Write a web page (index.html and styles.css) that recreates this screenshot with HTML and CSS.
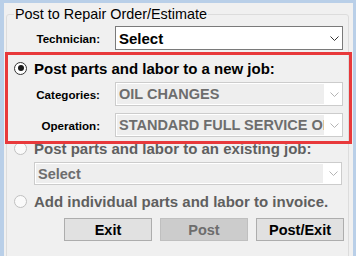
FILE: index.html
```html
<!DOCTYPE html>
<html>
<head>
<meta charset="utf-8">
<link rel="stylesheet" href="styles.css">
</head>
<body>
<div class="window">
  <fieldset class="group">
    <legend class="legend">Post to Repair Order/Estimate</legend>

    <div class="field tech">
      <span class="lbl">Technician:</span>
      <div class="combo">
        <span class="val">Select</span>
        <span class="arrow"><svg class="chev" width="9" height="5" viewBox="0 0 9 5"><polyline points="0.5,0.5 4.5,4.5 8.5,0.5" fill="none" stroke="#333" stroke-width="1"/></svg></span>
      </div>
    </div>

    <div class="radio-row r1">
      <span class="radio checked"></span>
      <span class="rtext">Post parts and labor to a new job:</span>
    </div>

    <div class="field cat">
      <span class="lbl">Categories:</span>
      <div class="combo disabled">
        <span class="val">OIL CHANGES</span>
        <span class="arrow"><svg class="chev" width="9" height="5" viewBox="0 0 9 5"><polyline points="0.5,0.5 4.5,4.5 8.5,0.5" fill="none" stroke="#b4b4b4" stroke-width="1"/></svg></span>
      </div>
    </div>

    <div class="field op">
      <span class="lbl">Operation:</span>
      <div class="combo disabled">
        <span class="val">STANDARD FULL SERVICE OIL CHANGE</span>
        <span class="arrow"><svg class="chev" width="9" height="5" viewBox="0 0 9 5"><polyline points="0.5,0.5 4.5,4.5 8.5,0.5" fill="none" stroke="#b4b4b4" stroke-width="1"/></svg></span>
      </div>
    </div>

    <div class="radio-row r2 dim">
      <span class="radio"></span>
      <span class="rtext">Post parts and labor to an existing job:</span>
    </div>

    <div class="combo disabled wide">
      <span class="val">Select</span>
      <span class="arrow"><svg class="chev" width="9" height="5" viewBox="0 0 9 5"><polyline points="0.5,0.5 4.5,4.5 8.5,0.5" fill="none" stroke="#b4b4b4" stroke-width="1"/></svg></span>
    </div>

    <div class="radio-row r3 dim">
      <span class="radio"></span>
      <span class="rtext">Add individual parts and labor to invoice.</span>
    </div>

    <div class="buttons">
      <button class="btn">Exit</button>
      <button class="btn off">Post</button>
      <button class="btn">Post/Exit</button>
    </div>
  </fieldset>
  <div class="highlight"></div>
</div>
</body>
</html>
```

FILE: styles.css
```css
html, body {
  margin: 0;
  padding: 0;
}

body {
  background: #f0f0f0;
  font-family: "Liberation Sans", Arial, sans-serif;
}

.window {
  position: relative;
  box-sizing: border-box;
  width: 356px;
  height: 256px;
  overflow: hidden;
  background: #f0f0f0;
  border-left: 4px solid #b9cfe8;
  border-top: 3px solid #b9cfe8;
  border-right: 3px solid #b9cfe8;
}

.group {
  margin: 3px 4px 0 2px;
  padding: 0;
  min-width: 0;
  height: 262px;
  box-sizing: border-box;
  border: 1px solid #dcdcdc;
  border-radius: 3px;
}

.legend {
  margin-left: 7px;
  padding: 0 1px;
  font-size: 14.4px;
  line-height: 16px;
  color: #000;
}

.field {
  display: flex;
  align-items: center;
  height: 24px;
}

.tech { margin-top: 4px; }
.cat { margin-top: 5px; }
.op { margin-top: 7px; }

.lbl {
  width: 93px;
  margin-right: 15px;
  text-align: right;
  font-weight: bold;
  font-size: 11.6px;
  color: #000;
  flex: none;
}

.combo {
  box-sizing: border-box;
  display: flex;
  width: 228px;
  height: 24px;
  padding: 1px;
  border: 1px solid #7a7a7a;
  background: #fff;
  flex: none;
}

.combo.disabled {
  border-color: #cccccc;
}

.combo .val {
  flex: 1;
  min-width: 0;
  display: flex;
  align-items: center;
  padding-left: 2px;
  overflow: hidden;
  white-space: nowrap;
  font-weight: bold;
  font-size: 15px;
  color: #000;
}

.combo.disabled .val {
  background: #eeeeee;
  color: #6d6d6d;
  font-size: 14.5px;
}

.arrow {
  width: 17px;
  flex: none;
  display: flex;
  align-items: center;
  justify-content: flex-end;
  padding-right: 2px;
  box-sizing: border-box;
}

.chev {
  display: block;
}

.combo.wide {
  width: 308px;
  height: 23px;
  margin-top: 5px;
  margin-left: 27px;
}

.radio-row {
  display: flex;
  align-items: center;
  height: 18px;
  padding-left: 7px;
}

.r1 { margin-top: 9px; }
.r2 { margin-top: 2px; }
.r3 { margin-top: 7px; }

.radio {
  box-sizing: border-box;
  width: 13px;
  height: 13px;
  border-radius: 50%;
  border: 1px solid #c0c0c0;
  background: #fafafa;
  margin-right: 7px;
  flex: none;
  display: flex;
  align-items: center;
  justify-content: center;
}

.radio.checked {
  border-color: #333333;
  background: #fff;
}

.radio.checked::after {
  content: "";
  width: 6px;
  height: 6px;
  border-radius: 50%;
  background: #1a1a1a;
}

.rtext {
  font-weight: bold;
  font-size: 15px;
  color: #000;
  white-space: nowrap;
}

.dim .rtext {
  color: #5f5f5f;
}

.buttons {
  display: flex;
  gap: 8px;
  margin-top: 8px;
  margin-left: 57px;
}

.btn {
  box-sizing: border-box;
  width: 88px;
  height: 23px;
  padding: 0;
  margin: 0;
  border: 1px solid #adadad;
  background: #e1e1e1;
  font-family: "Liberation Sans", Arial, sans-serif;
  font-weight: bold;
  font-size: 14.5px;
  color: #000;
  border-radius: 0;
}

.btn.off {
  background: #cccccc;
  border-color: #bfbfbf;
  color: #6d6d6d;
}

.highlight {
  position: absolute;
  left: 1px;
  top: 49px;
  width: 347px;
  height: 92px;
  box-sizing: border-box;
  border: 3px solid #e8393b;
  pointer-events: none;
}
```
